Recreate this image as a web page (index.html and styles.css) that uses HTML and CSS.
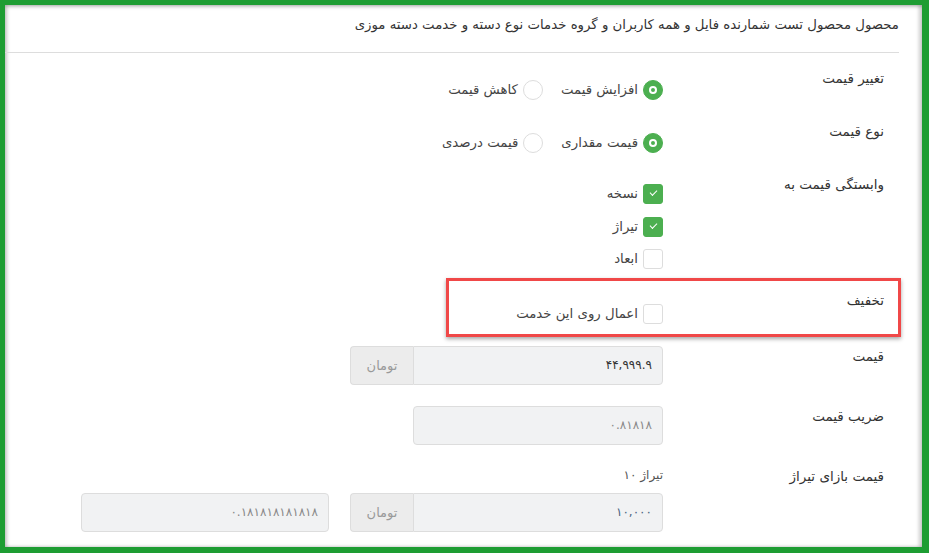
FILE: index.html
```html
<!DOCTYPE html>
<html lang="fa" dir="rtl">
    <head>
        <meta charset="utf-8">
        <title>قیمت خدمت</title>
        <link rel="stylesheet" href="styles.css">
    </head>
    <body>
        <div class="panel">
            <div class="title">محصول محصول تست شمارنده فایل و همه کاربران و گروه خدمات نوع دسته و خدمت دسته موزی</div>

            <div class="form">
                <div class="row">
                    <div class="label">تغییر قیمت</div>
                    <div class="field">
                        <div class="choices">
                            <label class="choice"><span class="radio on"></span>افزایش قیمت</label>
                            <label class="choice"><span class="radio"></span>کاهش قیمت</label>
                        </div>
                    </div>
                </div>

                <div class="row">
                    <div class="label">نوع قیمت</div>
                    <div class="field">
                        <div class="choices">
                            <label class="choice"><span class="radio on"></span>قیمت مقداری</label>
                            <label class="choice"><span class="radio"></span>قیمت درصدی</label>
                        </div>
                    </div>
                </div>

                <div class="row tight">
                    <div class="label">وابستگی قیمت به</div>
                    <div class="field checks">
                        <label class="choice"><span class="check on"></span>نسخه</label>
                        <label class="choice"><span class="check on"></span>تیراژ</label>
                        <label class="choice"><span class="check"></span>ابعاد</label>
                    </div>
                </div>

                <div class="row marked">
                    <div class="label">تخفیف</div>
                    <div class="field">
                        <label class="choice"><span class="check"></span>اعمال روی این خدمت</label>
                    </div>
                </div>

                <div class="row">
                    <div class="label">قیمت</div>
                    <div class="field flat">
                        <div class="group">
                            <div class="input dark">۴۴,۹۹۹.۹</div>
                            <div class="addon">تومان</div>
                        </div>
                    </div>
                </div>

                <div class="row">
                    <div class="label">ضریب قیمت</div>
                    <div class="field flat">
                        <div class="input single">۰.۸۱۸۱۸</div>
                    </div>
                </div>

                <div class="row">
                    <div class="label">قیمت بازای تیراژ</div>
                    <div class="field flat">
                        <div class="hint">تیراژ ۱۰</div>
                        <div class="pair">
                            <div class="group">
                                <div class="input blue">۱۰,۰۰۰</div>
                                <div class="addon">تومان</div>
                            </div>
                            <div class="input single wide">۰.۱۸۱۸۱۸۱۸۱۸۱۸</div>
                        </div>
                    </div>
                </div>
            </div>
        </div>
    </body>
</html>
```

FILE: styles.css
```css
body {
    margin: 0;
    background: #1e9d33;
    font-family: "DejaVu Sans", sans-serif;
    font-size: 13.3px;
    color: #333;
}
.panel {
    margin: 5px 7px 6px 5px;
    height: 542px;
    overflow: hidden;
    background: #fff;
    box-shadow: inset 1px 1px 4px rgba(0, 0, 0, 0.35), inset -4px 0 3px rgba(0, 0, 0, 0.12);
}
.title {
    margin-right: 23px;
    padding: 10px 0 17px;
    line-height: 20px;
    border-bottom: 1px solid #ddd;
}
.form {
    padding: 15px 38px 0 0;
}
.row {
    display: grid;
    grid-template-columns: 221px 1fr;
    margin-bottom: 21px;
}
.row.tight {
    margin-bottom: 9px;
}
.label {
    line-height: 20px;
    font-size: 13.5px;
}
.field {
    padding-top: 12px;
}
.field.flat {
    padding-top: 0;
}
.choices {
    display: flex;
    gap: 18px;
}
.choice {
    display: flex;
    align-items: center;
    gap: 5px;
    line-height: 20px;
    color: #444;
}
.checks {
    display: flex;
    flex-direction: column;
    align-items: flex-start;
    gap: 12.5px;
    padding-top: 10px;
}
.radio, .check {
    box-sizing: border-box;
    width: 20px;
    height: 20px;
    border: 1px solid #ddd;
    background: #fff;
    position: relative;
}
.radio {
    border-radius: 50%;
}
.check {
    border-radius: 3px;
}
.radio.on, .check.on {
    background: #4caf50;
    border-color: #4caf50;
}
.radio.on::after {
    content: "";
    position: absolute;
    left: 5px;
    top: 5px;
    width: 4px;
    height: 4px;
    border: 2px solid #fff;
    border-radius: 50%;
}
.check.on::after {
    content: "";
    position: absolute;
    left: 6px;
    top: 5px;
    width: 6px;
    height: 3px;
    border-left: 1.5px solid #fff;
    border-bottom: 1.5px solid #fff;
    transform: rotate(-45deg);
}
.row.marked {
    box-sizing: border-box;
    width: 455px;
    margin: 0 -17px 9px 0;
    padding: 9px 14px 10px 0;
    border: 3px solid #f04848;
    box-shadow: 0 2px 4px rgba(0, 0, 0, 0.35);
}
.row.marked .field {
    padding-top: 14px;
}
.group {
    display: flex;
}
.input {
    box-sizing: border-box;
    width: 250px;
    height: 39px;
    padding: 0 10px;
    line-height: 37px;
    font-size: 12px;
    color: #888;
    background: #f1f2f3;
    border: 1px solid #ddd;
    border-radius: 0 4px 4px 0;
}
.input.single {
    border-radius: 4px;
}
.input.wide {
    width: 248px;
}
.input.dark {
    color: #333;
}
.input.blue {
    color: #4a6480;
}
.addon {
    box-sizing: border-box;
    width: 63px;
    height: 39px;
    line-height: 37px;
    text-align: center;
    font-size: 13px;
    color: #999;
    background: #ececec;
    border: 1px solid #ddd;
    border-right: 0;
    border-radius: 4px 0 0 4px;
}
.hint {
    line-height: 18px;
    font-size: 12px;
    color: #555;
    margin-bottom: 9px;
}
.pair {
    display: flex;
    gap: 21px;
}
```
